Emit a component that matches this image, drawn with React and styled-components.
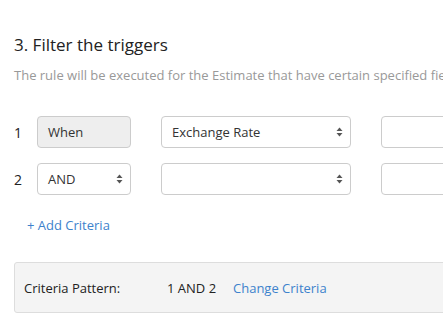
import React from "react";
import styled, { createGlobalStyle } from "styled-components";

const GlobalStyle = createGlobalStyle`
  body {
    margin: 0;
    background: #fff;
    font-family: "Open Sans", "Lato", sans-serif;
    color: #333;
    overflow: hidden;
  }
`;

const Page = styled.div`
  width: 720px;
  padding: 33px 0 0 14px;
`;

const Title = styled.h3`
  margin: 0;
  font-size: 17px;
  font-weight: 400;
  line-height: 24px;
  color: #222;
`;

const Subtitle = styled.p`
  margin: 9px 0 0;
  font-size: 13px;
  line-height: 18px;
  color: #999;
  white-space: nowrap;
`;

const Rows = styled.div`
  margin-top: 32px;
  display: flex;
  flex-direction: column;
  gap: 15px;
`;

const Row = styled.div`
  display: flex;
  align-items: center;
`;

const Num = styled.span`
  width: 23px;
  font-size: 14px;
  color: #222;
`;

const Field = styled.div`
  box-sizing: border-box;
  position: relative;
  display: flex;
  align-items: center;
  width: ${(p) => p.w}px;
  height: 32px;
  margin-right: ${(p) => p.gap || 0}px;
  padding: 0 10px;
  border: 1px solid #ccc;
  border-radius: 4px;
  background: ${(p) => (p.disabled ? "#eee" : "#fff")};
  font-size: 13px;
  color: #333;
  flex-shrink: 0;
`;

const Arrows = styled.svg`
  position: absolute;
  right: 7px;
  top: 50%;
  margin-top: -5px;
`;

const Caret = () => (
  <Arrows width="7" height="10" viewBox="0 0 7 10">
    <path d="M3.5 0.5 L6.5 4 L0.5 4 Z" fill="#555" />
    <path d="M3.5 9.5 L6.5 6 L0.5 6 Z" fill="#555" />
  </Arrows>
);

const AddLink = styled.a`
  display: inline-block;
  margin: 21px 0 0 13px;
  font-size: 13px;
  line-height: 18px;
  color: #3d82cc;
  cursor: pointer;
`;

const PatternBox = styled.div`
  box-sizing: border-box;
  margin-top: 27px;
  height: 51px;
  display: flex;
  align-items: center;
  padding-left: 9px;
  background: #f4f4f4;
  border: 1px solid #ddd;
  border-radius: 3px;
  font-size: 13px;
`;

const Label = styled.span`
  width: 143px;
  color: #222;
`;

const Value = styled.span`
  width: 66px;
  color: #222;
`;

const Change = styled.a`
  color: #3d82cc;
  cursor: pointer;
`;

export default function App() {
  return (
    <>
      <GlobalStyle />
      <Page>
        <Title>3. Filter the triggers</Title>
        <Subtitle>
          The rule will be executed for the Estimate that have certain specified fields
        </Subtitle>
        <Rows>
          <Row>
            <Num>1</Num>
            <Field w={94} gap={30} disabled>
              When
            </Field>
            <Field w={190} gap={30}>
              Exchange Rate
              <Caret />
            </Field>
            <Field w={190} />
          </Row>
          <Row>
            <Num>2</Num>
            <Field w={94} gap={30}>
              AND
              <Caret />
            </Field>
            <Field w={190} gap={30}>
              <Caret />
            </Field>
            <Field w={190} />
          </Row>
        </Rows>
        <AddLink>+ Add Criteria</AddLink>
        <PatternBox>
          <Label>Criteria Pattern:</Label>
          <Value>1 AND 2</Value>
          <Change>Change Criteria</Change>
        </PatternBox>
      </Page>
    </>
  );
}
